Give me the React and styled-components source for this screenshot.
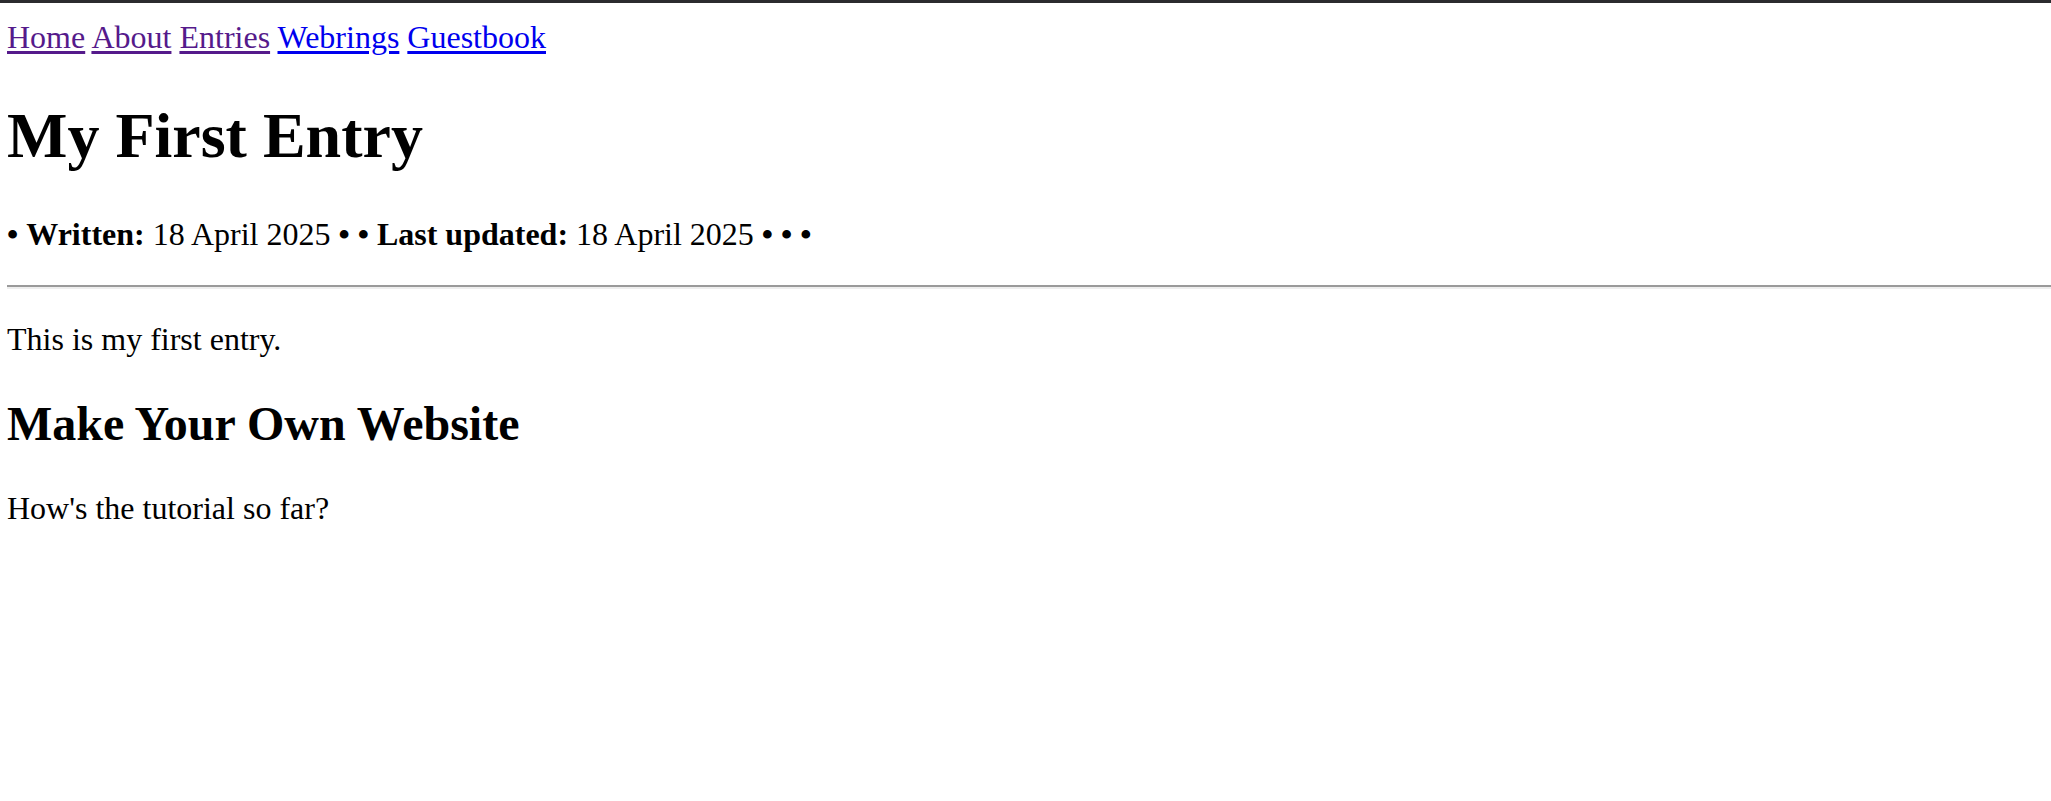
import React from "react";
import styled, { createGlobalStyle } from "styled-components";

const GlobalStyle = createGlobalStyle`
  html {
    border-top: 3px solid #2b2b2e;
    background: #ffffff;
  }
  body {
    margin: 16px 0 0 7px;
    font-family: "Liberation Serif", "Times New Roman", serif;
    font-size: 32px;
    color: #000000;
    overflow: hidden;
  }
`;

const Nav = styled.nav`
  line-height: normal;
`;

const NavLink = styled.a`
  color: ${(p) => (p.$visited ? "#551a8b" : "#0000ee")};
  text-decoration: underline;
  text-decoration-thickness: 3px;
  text-underline-offset: 3px;
`;

const Title = styled.h1`
  font-size: 64px;
  font-weight: bold;
  margin: 0.67em 0;
`;

const Meta = styled.p`
  margin: 1em 0;
`;

const Rule = styled.hr`
  margin: 16px 0;
  height: 0;
  border: none;
  border-top: 2px solid #9a9a9a;
  border-bottom: 2px solid #eeeeee;
`;

const Text = styled.p`
  margin: 1em 0;
`;

const Subtitle = styled.h2`
  font-size: 48px;
  font-weight: bold;
  margin: 0.8em 0;
`;

const links = [
  { label: "Home", visited: true },
  { label: "About", visited: true },
  { label: "Entries", visited: true },
  { label: "Webrings", visited: false },
  { label: "Guestbook", visited: false },
];

const App = () => {
  return (
    <>
      <GlobalStyle />
      <Nav>
        {links.map((l, i) => (
          <React.Fragment key={l.label}>
            {i > 0 && " "}
            <NavLink href="#" $visited={l.visited}>
              {l.label}
            </NavLink>
          </React.Fragment>
        ))}
      </Nav>
      <Title>My First Entry</Title>
      <Meta>
        <b>•</b> <b>Written:</b> 18 April 2025 <b>•</b> <b>•</b>{" "}
        <b>Last updated:</b> 18 April 2025 <b>•</b> <b>•</b> <b>•</b>
      </Meta>
      <Rule />
      <Text>This is my first entry.</Text>
      <Subtitle>Make Your Own Website</Subtitle>
      <Text>How's the tutorial so far?</Text>
    </>
  );
};

export default App;
